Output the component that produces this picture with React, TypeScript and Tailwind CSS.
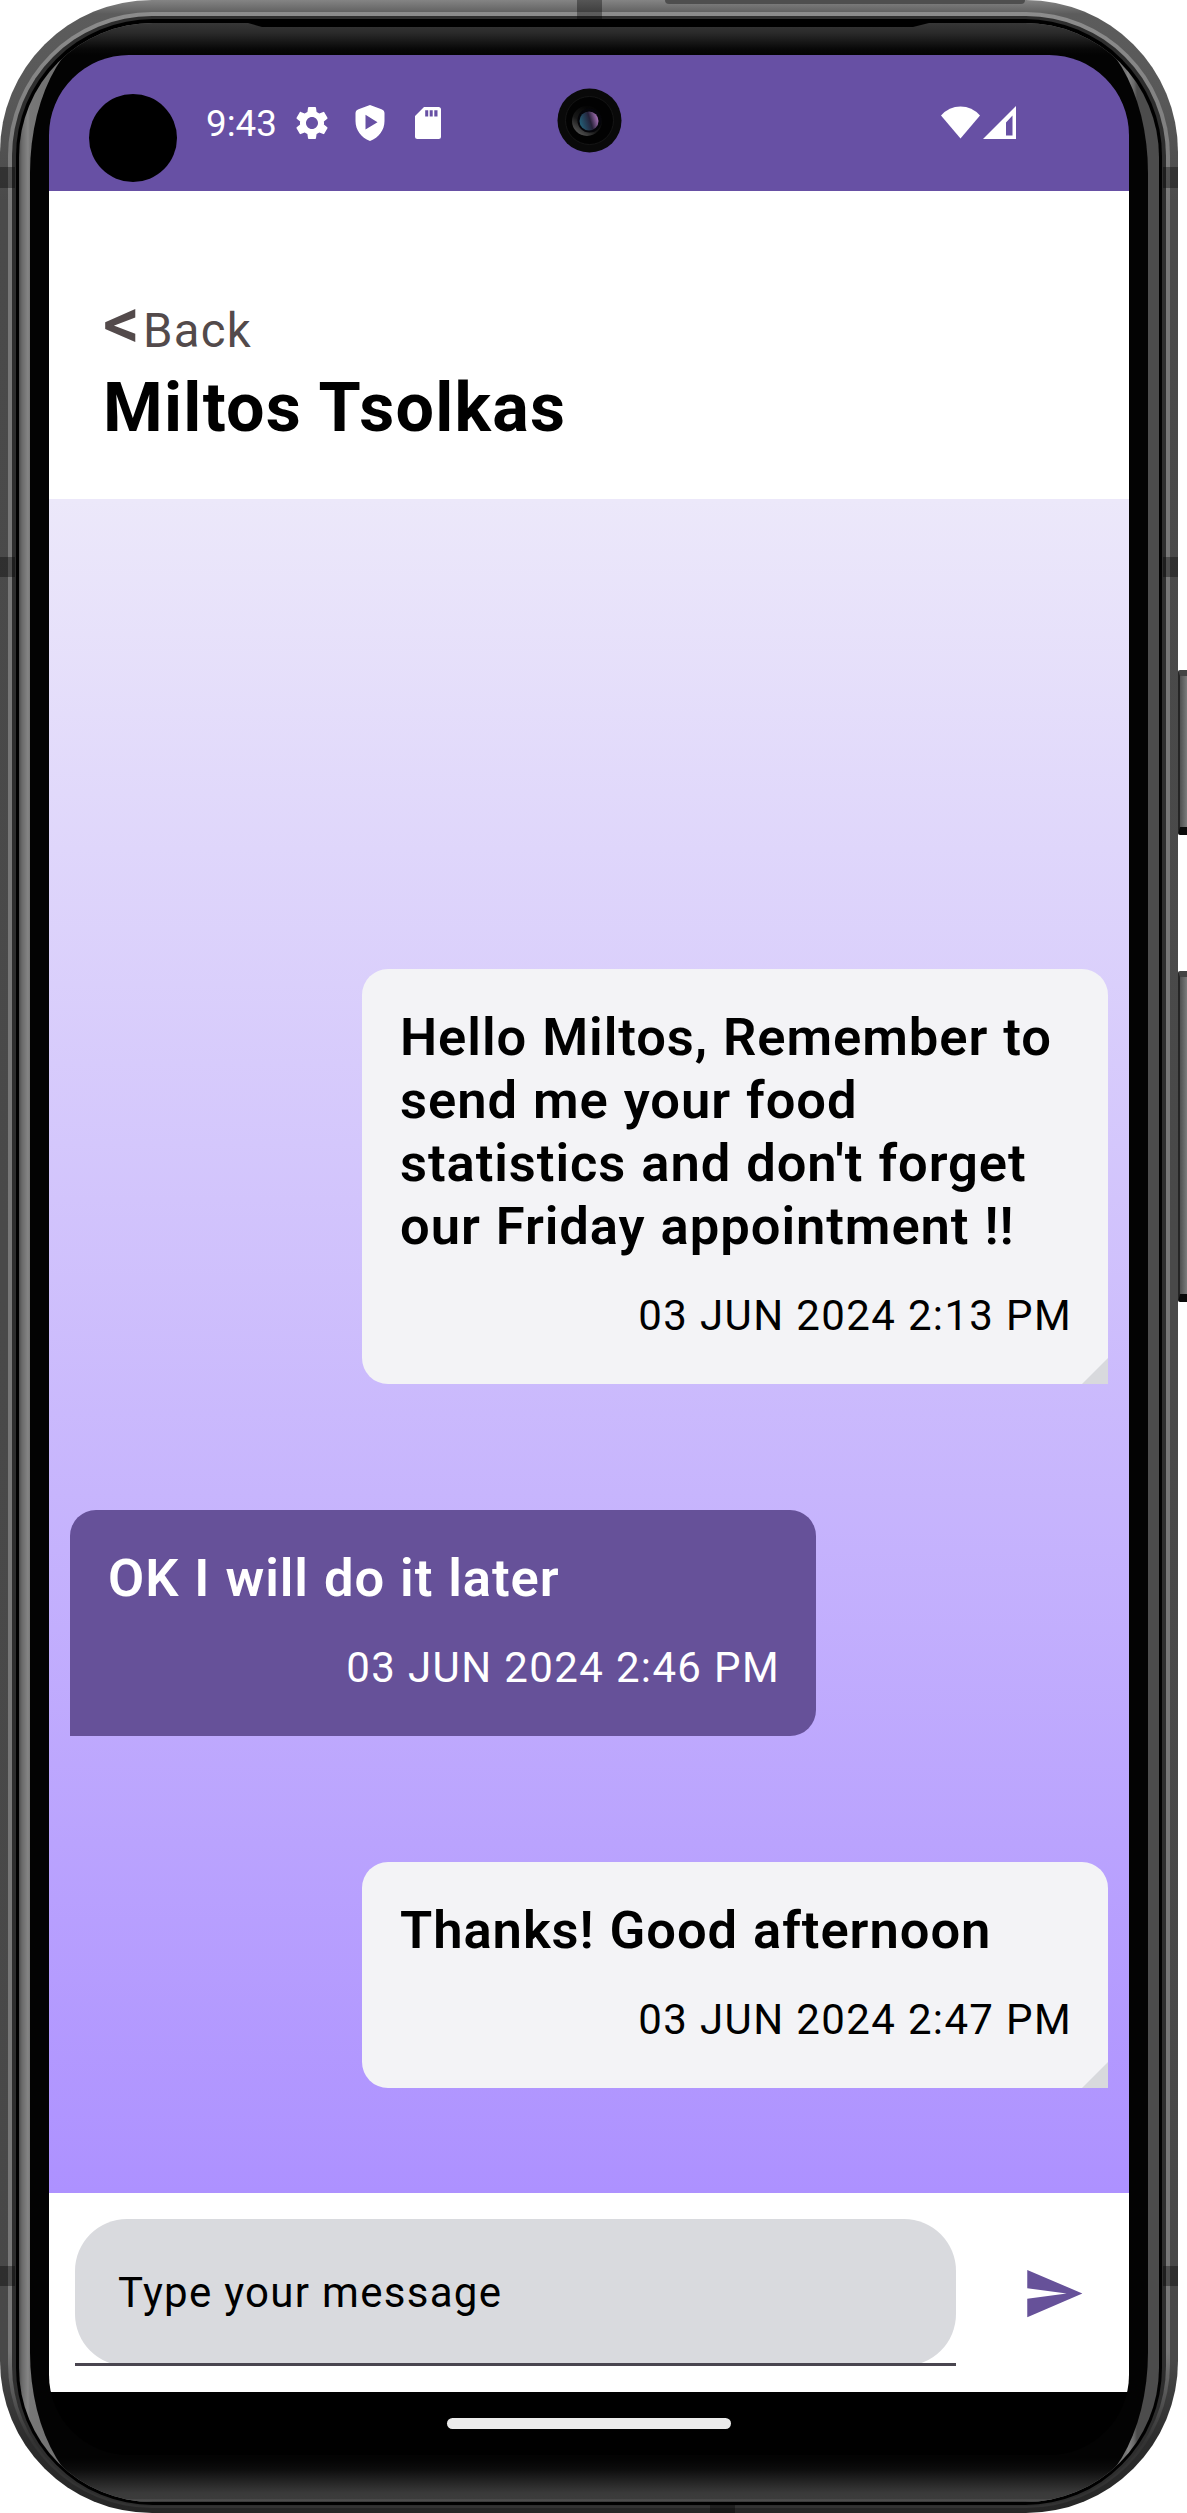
import React from "react";
import { MdSettings, MdSend } from "react-icons/md";

type Message = { text: string; time: string; mine: boolean; gap: string };

const messages: Message[] = [
  {
    text: "Hello Miltos, Remember to send me your food statistics and don't forget our Friday appointment !!",
    time: "03 JUN 2024 2:13 PM",
    mine: true,
    gap: "mt-[470px]",
  },
  { text: "OK I will do it later", time: "03 JUN 2024 2:46 PM", mine: false, gap: "mt-[126px]" },
  { text: "Thanks! Good afternoon", time: "03 JUN 2024 2:47 PM", mine: true, gap: "mt-[126px]" },
];

function StatusBar() {
  return (
    <div className="relative flex h-[136px] shrink-0 items-start bg-[#6750a4] text-white">
      <div className="ml-10 mt-[39px] size-[88px] rounded-full bg-black" />
      <span className="ml-[29px] mt-[48px] w-[71px] text-[36.75px] leading-[42px]">9:43</span>
      <MdSettings className="ml-[15px] mt-[48px] size-[40px]" />
      <svg className="ml-[23px] mt-[50px] h-[36px] w-[30px]" viewBox="0 0 30 36" fill="currentColor">
        <path
          fillRule="evenodd"
          d="M15 0l11.500 4.200Q29.500 5.300 29.500 8.200V16c0 9-5.500 16.500-14.500 20C6 32.500.5 25 .5 16V8.200Q.5 5.300 3.500 4.200zM10.500 9.800v14.700l12-7.300z"
        />
      </svg>
      <svg className="ml-[30px] mt-[52px] h-[32px] w-[26px]" viewBox="0 0 26 32" fill="currentColor">
        <path
          fillRule="evenodd"
          d="M9 0h14.500Q26 0 26 2.500v27Q26 32 23.500 32h-21Q0 32 0 29.500V9zM10.200 3.200v6.300h3V3.200zM14.700 3.200v6.300h3V3.200zM19.300 3.200v6.300h3.200V3.200z"
        />
      </svg>
      <svg className="absolute left-[508px] top-[33px] size-[65px]" viewBox="0 0 65 65">
        <defs>
          <linearGradient id="lens" x1="0" y1="0.6" x2="1" y2="0.3">
            <stop offset="0" stopColor="#236078" />
            <stop offset="0.55" stopColor="#252038" />
            <stop offset="1" stopColor="#b57bc4" />
          </linearGradient>
          <linearGradient id="ring" x1="0.1" y1="1" x2="0.7" y2="0.2">
            <stop offset="0" stopColor="#666" />
            <stop offset="0.5" stopColor="#181818" />
            <stop offset="1" stopColor="#050505" />
          </linearGradient>
        </defs>
        <circle cx="32.500" cy="32.500" r="32" fill="#090909" />
        <circle cx="32.500" cy="32.500" r="24" fill="#020202" stroke="#151515" />
        <circle cx="30" cy="33" r="15" fill="url(#ring)" />
        <circle cx="32.500" cy="32.500" r="12" fill="#05050a" />
        <circle cx="32" cy="33" r="9.500" fill="url(#lens)" />
      </svg>
      <svg className="ml-auto mr-[3px] mt-[51px] h-[33px] w-[39px]" viewBox="0 0 39 33" fill="currentColor">
        <path d="M0 9.500Q8 .5 19.500.5T39 9.500L19.500 32.500z" />
      </svg>
      <svg className="mr-[113px] mt-[51px] h-[33px] w-[33px]" viewBox="0 0 33 33" fill="currentColor">
        <path fillRule="evenodd" d="M33 0v33H0zM29.500 9.500L23 16.500V29.500h6.500z" />
      </svg>
    </div>
  );
}

function Header() {
  return (
    <div className="flex h-[308px] shrink-0 flex-col bg-white pl-[54px] pt-[103px]">
      <div className="flex h-[74px] items-start text-[#534a4b]">
        <span className="w-[40px] text-[73px] font-medium leading-[58px]">&lt;</span>
        <span className="mt-[6px] text-[47.25px] leading-[63px] tracking-[1.3px]">Back</span>
      </div>
      <h1 className="text-[68.25px] font-bold leading-[80px] tracking-[1.25px] text-black">Miltos Tsolkas</h1>
    </div>
  );
}

function Bubble({ message }: { message: Message }) {
  return (
    <div
      className={
        (message.mine
          ? "self-end rounded-br-none bg-[#f3f3f6] text-black "
          : "self-start rounded-bl-none bg-[#665199] text-white ") +
        message.gap +
        " relative w-[746px] rounded-[26px] py-[37px] pl-[38px] pr-[36px]"
      }
    >
      <p className="text-[52.5px] font-semibold leading-[63px] tracking-[0.95px] [word-spacing:1px]">{message.text}</p>
      <p className="mt-[26px] text-right text-[42px] leading-[63px] tracking-[1.36px]">{message.time}</p>
      {message.mine && (
        <div className="absolute bottom-0 right-0 size-[26px] bg-[#d8d9dd] [clip-path:polygon(100%_0,100%_100%,0_100%)]" />
      )}
    </div>
  );
}

function Composer() {
  return (
    <div className="flex h-[199px] shrink-0 items-start bg-white px-[26px] pt-[26px]">
      <div className="h-[147px] w-[881px] border-b-[3px] border-[#49454f]">
        <div className="h-[144px] overflow-hidden">
          <div className="flex h-[147px] items-center rounded-[52px] bg-[#d9dade] pl-[43px] text-[42px] tracking-[1.3px] text-black">
            Type your message
          </div>
        </div>
      </div>
      <MdSend className="ml-[66px] mt-[43px] size-[63px] text-[#665199]" />
    </div>
  );
}

function Screen() {
  return (
    <div className="flex h-[2400px] w-[1080px] flex-col overflow-hidden rounded-[80px] bg-black">
      <StatusBar />
      <Header />
      <div className="flex h-[1694px] shrink-0 flex-col bg-[linear-gradient(180deg,#ece8fa,#ad91ff)] px-[21px]">
        {messages.map((m) => (
          <Bubble key={m.time} message={m} />
        ))}
      </div>
      <Composer />
      <div className="mx-auto mt-[26px] h-[11px] w-[284px] rounded-full bg-[#ebebeb]" />
    </div>
  );
}

const bands = [
  "left-0 top-[167px] h-[21px] w-[15px]",
  "right-0 top-[167px] h-[21px] w-[15px]",
  "left-0 top-[557px] h-[20px] w-[15px]",
  "right-0 top-[557px] h-[20px] w-[15px]",
  "left-0 top-[2266px] h-[20px] w-[15px]",
  "right-0 top-[2266px] h-[20px] w-[15px]",
  "left-[577px] top-0 h-[20px] w-[25px]",
  "left-[710px] bottom-0 h-[8px] w-[25px]",
];

export default function App() {
  return (
    <div className="flex h-[2513px] w-[1187px] items-start overflow-hidden bg-white font-['Roboto',sans-serif]">
      <div className="relative h-[2513px] w-[1178px] shrink-0 overflow-hidden rounded-[152px] bg-[linear-gradient(180deg,#848484_0,#5c5c5c_14px,#585858_100px,#4a4a4a_200px,#484848_2360px,#2c2c2c_2440px,#262626_100%)] px-[8px] pb-[5px] pt-[12px]">
        <div className="rounded-[144px] bg-[linear-gradient(180deg,#8c8c8c,#777_200px,#777_2340px,#333_2430px,#333)] px-[4px] pb-[2px] pt-[4px]">
          <div className="rounded-[140px] bg-[#2e2e2e] px-[4px] pb-[1px] pt-[3px]">
            <div className="rounded-[137px] bg-black px-[3px] pb-[3px] pt-[4px]">
              <div className="relative overflow-hidden rounded-[134px] bg-[linear-gradient(90deg,#4c4c4c_0,#6a6a6a_3px,#858585_9px,#777_11px,#6c6c6c_60px,#6c6c6c_1080px,#777_1107px,#858585_1109px,#6a6a6a_1115px,#4c4c4c_1118px)] px-[11px]">
                <div className="h-[2479px] rounded-[90px/150px] bg-[linear-gradient(180deg,#363636_0,#2a2a2a_10px,#080808_26px,#030303_32px,#030303_2435px,#0c0c0c_2446px,#3a3a3a_2470px,#3c3c3c_2476px,#555_2477px,#333_2479px)] px-[19px] pt-[32px]">
                  <Screen />
                </div>
                <div className="absolute left-[229px] top-0 h-[4px] w-[681px] bg-black [clip-path:polygon(0_0,100%_0,665px_100%,14px_100%)]" />
              </div>
            </div>
          </div>
        </div>
        {bands.map((b) => (
          <div key={b} className={"absolute bg-black/35 " + b} />
        ))}
        <div className="absolute left-[665px] top-0 h-[4px] w-[360px] rounded-b-[4px] bg-[#4e4e4e]" />
      </div>
      <div className="flex w-[9px] shrink-0 flex-col pt-[670px]">
        <div className="h-[165px] rounded-l-[2px] border-b-[8px] border-l-2 border-t-[6px] border-b-[#0a0a0a] border-l-[#252525] border-t-[#444] bg-linear-to-r from-[#505050] to-[#7c7c7c]" />
        <div className="mt-[136px] h-[331px] rounded-l-[2px] border-b-[8px] border-l-2 border-t-[6px] border-b-[#0a0a0a] border-l-[#252525] border-t-[#444] bg-linear-to-r from-[#505050] to-[#7c7c7c]" />
      </div>
    </div>
  );
}
